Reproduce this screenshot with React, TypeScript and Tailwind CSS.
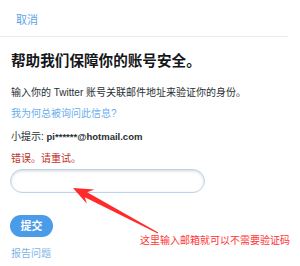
export default function App() {
  return (
    <div className="relative w-[300px] h-[266px] overflow-hidden bg-white font-['Liberation_Sans','Noto_Sans_CJK_SC',sans-serif] text-[#292f33]">
      <div className="h-[37px] mr-[12px] border-b border-[#e6ecf0] pl-[16px] pt-[13px]">
        <span className="block text-[11px] leading-[14px] text-[#5ba3e8]">取消</span>
      </div>

      <div className="flex flex-col items-start px-[11px]">
        <h1 className="mt-[15px] text-[14.6px] leading-[18px] font-bold text-[#14171a]">帮助我们保障你的账号安全。</h1>
        <p className="mt-[16px] text-[10px] leading-[14px]">输入你的 Twitter 账号关联邮件地址来验证你的身份。</p>
        <p className="mt-[7px] text-[10px] leading-[14px] text-[#6aaeea]">我为何总被询问此信息?</p>
        <p className="mt-[9px] text-[10px] leading-[14px]">
          小提示: <span className="font-bold text-[9.5px]">pi******@hotmail.com</span>
        </p>
        <p className="mt-[8px] text-[10px] leading-[14px] text-[#c0322b]">错误。请重试。</p>
        <div className="mt-[3px] -ml-[1px] h-[24px] w-[195px] rounded-full border border-[#b9d5ef] bg-white shadow-[inset_0_1px_3px_rgba(0,0,0,0.18)]" />
        <button className="mt-[22px] -ml-[1px] h-[22px] w-[43px] rounded-full bg-[#4a9be8] text-[11px] font-bold text-white">
          提交
        </button>
        <p className="mt-[10px] text-[10px] leading-[14px] text-[#7fb5e8]">报告问题</p>
      </div>

      <svg className="absolute left-0 top-0" width="300" height="266" viewBox="0 0 300 266">
        <polygon
          points="73,188 94.4,189.5 87.2,192.2 158.2,232.6 157.8,233.4 84.8,197.2 86.9,203.7"
          fill="#ff2b2b"
        />
      </svg>
      <span className="absolute left-[140px] top-[235px] text-[10px] leading-[12px] text-[#ff3333]">
        这里输入邮箱就可以不需要验证码
      </span>
    </div>
  );
}
